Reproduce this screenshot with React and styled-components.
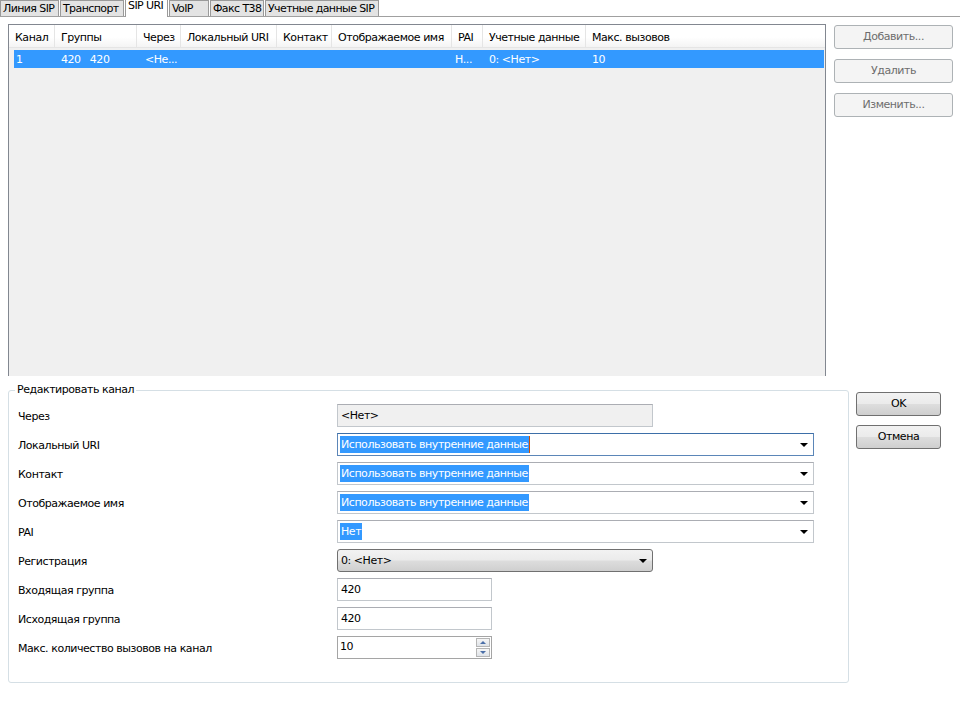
import React from 'react'
import styled, { createGlobalStyle } from 'styled-components'

const GlobalStyle = createGlobalStyle`
  html, body {
    margin: 0;
    padding: 0;
    background: #ffffff;
  }
  body {
    font-family: Tahoma, "DejaVu Sans", sans-serif;
    font-size: 11px;
    color: #000000;
  }
`

const Page = styled.div`
  width: 960px;
  height: 704px;
  background: #ffffff;
  overflow: hidden;
  font-family: "DejaVu Sans", "Liberation Sans", sans-serif;
  font-size: 11px;
  letter-spacing: -0.45px;
`

const TabBar = styled.div`
  display: flex;
  height: 16px;
  border-bottom: 1px solid #a0a0a0;
`

const Tab = styled.div`
  box-sizing: border-box;
  width: ${({ w }) => w}px;
  height: ${({ active }) => active ? 17 : 16}px;
  padding-left: 2px;
  line-height: ${({ active }) => active ? 12 : 15}px;
  background: ${({ active }) => active ? '#ffffff' : '#e3e3e3'};
  border: 1px solid #9a9a9a;
  border-top: ${({ active }) => active ? 'none' : '1px solid #9a9a9a'};
  border-bottom: none;
  margin-right: 1px;
  letter-spacing: -0.6px;
  white-space: nowrap;
  overflow: hidden;
  z-index: ${({ active }) => active ? 1 : 0};
`

const TopSection = styled.div`
  display: flex;
  gap: 8px;
  padding: 7px 0 0 8px;
`

const TableFrame = styled.div`
  box-sizing: border-box;
  width: 818px;
  height: 352px;
  border: 1px solid #828790;
  border-bottom: none;
  background: #f0f0f0;
`

const HeaderRow = styled.div`
  display: flex;
  height: 22px;
  background: linear-gradient(#ffffff 0%, #ffffff 55%, #f4f4f4 100%);
  border-bottom: 1px solid #e5e5e5;
`

const HeaderCell = styled.div`
  box-sizing: border-box;
  width: ${({ w }) => w ? `${w}px` : 'auto'};
  flex: ${({ w }) => w ? 'none' : 1};
  padding: 2px 0 0 6px;
  line-height: 22px;
  border-right: ${({ w }) => w ? '1px solid #e5e5e5' : 'none'};
  white-space: nowrap;
  overflow: hidden;
`

const DataRow = styled.div`
  display: flex;
  height: 18px;
  margin: 2px 1px 0 5px;
  background: #3399ff;
  color: #ffffff;
`

const DataCell = styled.div`
  box-sizing: border-box;
  width: ${({ w }) => w ? `${w}px` : 'auto'};
  flex: ${({ w }) => w ? 'none' : 1};
  padding-left: ${({ pad }) => pad || 2}px;
  line-height: 19px;
  white-space: pre;
  overflow: hidden;
`

const SideButtons = styled.div`
  display: flex;
  flex-direction: column;
  gap: 10px;
  padding-top: 1px;
`

const PushButton = styled.div`
  box-sizing: border-box;
  width: ${({ w }) => w}px;
  height: 24px;
  border: 1px solid ${({ disabled }) => disabled ? '#adb2b5' : '#707070'};
  border-radius: 3px;
  background: ${({ disabled }) => disabled
    ? '#f4f4f4'
    : 'linear-gradient(#f2f2f2 0%, #ebebeb 48%, #dddddd 52%, #cfcfcf 100%)'};
  color: ${({ disabled }) => disabled ? '#6d6d6d' : '#000000'};
  text-align: center;
  line-height: 22px;
`

const BottomSection = styled.div`
  display: flex;
  align-items: flex-start;
  gap: 7px;
  padding: 7px 0 0 8px;
`

const GroupBox = styled.fieldset`
  box-sizing: border-box;
  width: 841px;
  height: 300px;
  margin: 0;
  padding: 7px 0 0 9px;
  border: 1px solid #d5dfe5;
  border-radius: 3px;
`

const Legend = styled.legend`
  padding: 0 2px;
  margin-left: -3px;
  line-height: 14px;
`

const FormGrid = styled.div`
  display: grid;
  grid-template-columns: 319px 1fr;
  grid-auto-rows: 29px;
  align-items: start;
`

const Label = styled.div`
  line-height: 22px;
  padding-top: 2px;
`

const FieldBox = styled.div`
  box-sizing: border-box;
  position: relative;
  width: ${({ w }) => w}px;
  height: 23px;
  border: 1px solid ${({ focus }) => focus ? '#5b86b8' : '#c2c7cc'};
  border-top-color: ${({ focus }) => focus ? '#3d6fa8' : '#abadb3'};
  background: ${({ readOnly }) => readOnly ? '#f0f0f0' : '#ffffff'};
  padding: 2px 0 0 2px;
  display: flex;
  align-items: flex-start;
`

const SelectedText = styled.span`
  background: #3399ff;
  color: #ffffff;
  line-height: 17px;
  padding: 0 1px 0 1px;
  border-right: ${({ caret }) => caret ? '1px solid #d05000' : 'none'};
`

const PlainText = styled.span`
  line-height: 17px;
  padding-left: 1px;
`

const Arrow = styled.span`
  position: absolute;
  right: 5px;
  top: 9px;
  width: 0;
  height: 0;
  border-left: 4px solid transparent;
  border-right: 4px solid transparent;
  border-top: 4px solid #000000;
`

const ComboButton = styled.div`
  box-sizing: border-box;
  position: relative;
  width: 316px;
  height: 23px;
  border: 1px solid #707070;
  border-radius: 3px;
  background: linear-gradient(#f2f2f2 0%, #ebebeb 48%, #dddddd 52%, #cfcfcf 100%);
  padding-left: 3px;
  line-height: 21px;
`

const SpinBox = styled.div`
  box-sizing: border-box;
  position: relative;
  width: 155px;
  height: 23px;
  border: 1px solid #a5a5a5;
  padding-left: 2px;
  line-height: 20px;
`

const SpinButtons = styled.div`
  position: absolute;
  right: 1px;
  top: 1px;
  display: flex;
  flex-direction: column;
  gap: 1px;
`

const SpinButton = styled.div`
  box-sizing: border-box;
  width: 14px;
  height: 9px;
  border: 1px solid #b5b5b5;
  background: linear-gradient(#f6f6f6, #dfe3e8);
  display: flex;
  align-items: center;
  justify-content: center;
`

const SpinGlyph = styled.span`
  width: 0;
  height: 0;
  border-left: 3px solid transparent;
  border-right: 3px solid transparent;
  ${({ up }) => up ? 'border-bottom: 3px solid #4b6fa8;' : 'border-top: 3px solid #4b6fa8;'}
`

const DialogButtons = styled.div`
  display: flex;
  flex-direction: column;
  gap: 9px;
  padding-top: 9px;
`

const tabs = [
  { name: 'Линия SIP', w: 59 },
  { name: 'Транспорт', w: 64 },
  { name: 'SIP URI', w: 43, active: true },
  { name: 'VoIP', w: 40 },
  { name: 'Факс Т38', w: 54 },
  { name: 'Учетные данные SIP', w: 114 },
]

const columns = [
  { name: 'Канал', w: 46 },
  { name: 'Группы', w: 82 },
  { name: 'Через', w: 44 },
  { name: 'Локальный URI', w: 96 },
  { name: 'Контакт', w: 55 },
  { name: 'Отображаемое имя', w: 120 },
  { name: 'PAI', w: 31 },
  { name: 'Учетные данные', w: 103 },
  { name: 'Макс. вызовов' },
]

const rowCells = [
  { text: '1', w: 41 },
  { text: '420   420', w: 82, pad: 6 },
  { text: '<Не...', w: 44, pad: 8 },
  { text: '', w: 96 },
  { text: '', w: 55 },
  { text: '', w: 120 },
  { text: 'Н...', w: 31, pad: 3 },
  { text: '0: <Нет>', w: 103, pad: 6 },
  { text: '10', pad: 6 },
]

const Combo = ({ value, w = 477, focus, caret }) => (
  <FieldBox w={w} focus={focus}>
    <SelectedText caret={caret}>{value}</SelectedText>
    <Arrow />
  </FieldBox>
)

const App = () => (
  <Page>
    <GlobalStyle />
    <TabBar>
      {tabs.map(t => (
        <Tab key={t.name} w={t.w} active={t.active}>{t.name}</Tab>
      ))}
    </TabBar>

    <TopSection>
      <TableFrame>
        <HeaderRow>
          {columns.map(c => (
            <HeaderCell key={c.name} w={c.w}>{c.name}</HeaderCell>
          ))}
        </HeaderRow>
        <DataRow>
          {rowCells.map((c, i) => (
            <DataCell key={i} w={c.w} pad={c.pad}>{c.text}</DataCell>
          ))}
        </DataRow>
      </TableFrame>
      <SideButtons>
        <PushButton w={119} disabled>Добавить...</PushButton>
        <PushButton w={119} disabled>Удалить</PushButton>
        <PushButton w={119} disabled>Изменить...</PushButton>
      </SideButtons>
    </TopSection>

    <BottomSection>
      <GroupBox>
        <Legend>Редактировать канал</Legend>
        <FormGrid>
          <Label>Через</Label>
          <FieldBox w={316} readOnly><PlainText>&lt;Нет&gt;</PlainText></FieldBox>

          <Label>Локальный URI</Label>
          <Combo value="Использовать внутренние данные" focus caret />

          <Label>Контакт</Label>
          <Combo value="Использовать внутренние данные" />

          <Label>Отображаемое имя</Label>
          <Combo value="Использовать внутренние данные" />

          <Label>PAI</Label>
          <Combo value="Нет" />

          <Label>Регистрация</Label>
          <ComboButton>0: &lt;Нет&gt;<Arrow /></ComboButton>

          <Label>Входящая группа</Label>
          <FieldBox w={155}><PlainText>420</PlainText></FieldBox>

          <Label>Исходящая группа</Label>
          <FieldBox w={155}><PlainText>420</PlainText></FieldBox>

          <Label>Макс. количество вызовов на канал</Label>
          <SpinBox>
            10
            <SpinButtons>
              <SpinButton><SpinGlyph up /></SpinButton>
              <SpinButton><SpinGlyph /></SpinButton>
            </SpinButtons>
          </SpinBox>
        </FormGrid>
      </GroupBox>
      <DialogButtons>
        <PushButton w={85}>OK</PushButton>
        <PushButton w={85}>Отмена</PushButton>
      </DialogButtons>
    </BottomSection>
  </Page>
)

export default App
